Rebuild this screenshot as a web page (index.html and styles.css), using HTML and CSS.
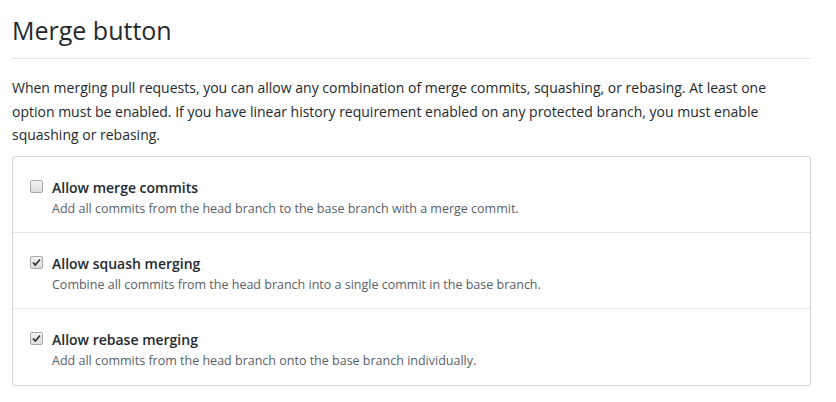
FILE: index.html
```html
<!DOCTYPE html>
<html>
<head>
<meta charset="utf-8">
<link rel="stylesheet" href="styles.css">
</head>
<body>
<div class="page">
  <h2 class="title">Merge button</h2>
  <p class="intro">When merging pull requests, you can allow any combination of merge commits, squashing, or rebasing. At least one option must be enabled. If you have linear history requirement enabled on any protected branch, you must enable squashing or rebasing.</p>
  <div class="box">
    <div class="row">
      <span class="check"></span>
      <div class="text">
        <div class="label">Allow merge commits</div>
        <div class="desc">Add all commits from the head branch to the base branch with a merge commit.</div>
      </div>
    </div>
    <div class="row">
      <span class="check checked"><svg viewBox="0 0 13 13" width="13" height="13"><path d="M3 6.5 L5.3 9 L10 3.5" fill="none" stroke="#333" stroke-width="1.8"/></svg></span>
      <div class="text">
        <div class="label">Allow squash merging</div>
        <div class="desc">Combine all commits from the head branch into a single commit in the base branch.</div>
      </div>
    </div>
    <div class="row">
      <span class="check checked"><svg viewBox="0 0 13 13" width="13" height="13"><path d="M3 6.5 L5.3 9 L10 3.5" fill="none" stroke="#333" stroke-width="1.8"/></svg></span>
      <div class="text">
        <div class="label">Allow rebase merging</div>
        <div class="desc">Add all commits from the head branch onto the base branch individually.</div>
      </div>
    </div>
  </div>
</div>
</body>
</html>
```
FILE: styles.css
```css
html, body {
  margin: 0;
  padding: 0;
  background: #fff;
}
body {
  font-family: "Open Sans", "Noto Sans", sans-serif;
  color: #24292e;
}
.page {
  width: 799px;
  padding: 0 0 0 12px;
}
.title {
  margin: 0;
  padding: 14px 0 12px;
  font-size: 25px;
  font-weight: 400;
  line-height: 32px;
  border-bottom: 1px solid #e1e4e8;
}
.intro {
  margin: 17px 0 9px;
  font-size: 14px;
  line-height: 23.5px;
}
.box {
  border: 1px solid #d1d5da;
  border-radius: 3px;
}
.row {
  display: flex;
  align-items: flex-start;
  padding: 21px 17px 0;
  height: 54px;
  border-top: 1px solid #e1e4e8;
}
.row:first-child {
  border-top: 0;
  height: 54px;
}
.row:last-child {
  height: 55px;
}
.check {
  flex: none;
  width: 11px;
  height: 11px;
  margin: 2px 9px 0 0;
  border: 1px solid #a8a8a8;
  border-radius: 2px;
  background: linear-gradient(#f4f4f4, #dcdcdc);
  position: relative;
}
.check svg {
  position: absolute;
  left: -1px;
  top: -1px;
}
.label {
  font-size: 14px;
  font-weight: 600;
  line-height: 20px;
}
.desc {
  margin-top: 2px;
  font-size: 12.5px;
  line-height: 18px;
  color: #586069;
}
```
